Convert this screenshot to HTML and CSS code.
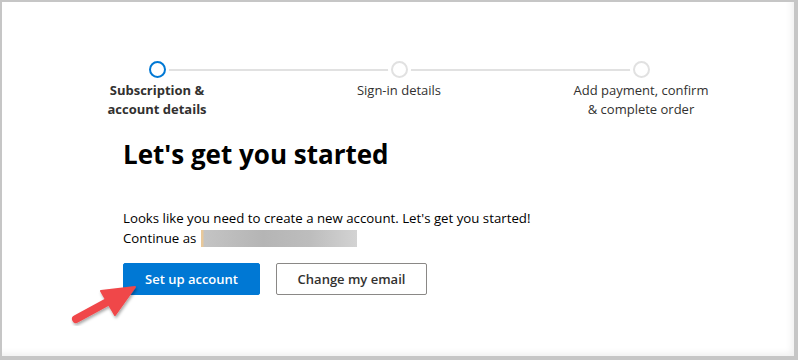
FILE: index.html
```html
<!DOCTYPE html>
<html lang="en">
<head>
  <meta charset="UTF-8" />
  <title>Let's get you started</title>
  <link rel="stylesheet" href="styles.css">
</head>
<body>
  <div class="frame">
    <div class="stepper">
      <div class="step active first">
        <span class="dot"></span>
        <span class="label">Subscription &amp;<br>account details</span>
      </div>
      <div class="step">
        <span class="dot"></span>
        <span class="label">Sign-in details</span>
      </div>
      <div class="step last">
        <span class="dot"></span>
        <span class="label">Add payment, confirm<br>&amp; complete order</span>
      </div>
    </div>

    <div class="content">
      <h1>Let's get you started</h1>
      <p class="intro">
        Looks like you need to create a new account. Let's get you started!<br>
        Continue as <span class="blur"></span>
      </p>
      <div class="actions">
        <button class="btn primary">Set up account</button>
        <button class="btn secondary">Change my email</button>
      </div>
    </div>

    <svg class="arrow" width="80" height="50" viewBox="0 0 80 50">
      <defs>
        <filter id="sh" x="-20%" y="-20%" width="150%" height="150%">
          <feDropShadow dx="1" dy="2" stdDeviation="1.6" flood-color="#000" flood-opacity="0.35"/>
        </filter>
      </defs>
      <g filter="url(#sh)" fill="#f0474a" stroke="#f0474a">
        <line x1="9" y1="43" x2="44" y2="24" stroke-width="8" stroke-linecap="round"/>
        <polygon points="68,11 34,15 48,39" stroke-width="2" stroke-linejoin="round"/>
      </g>
    </svg>
  </div>
</body>
</html>
```

FILE: styles.css
```css
* {
  box-sizing: border-box;
}

body {
  margin: 0;
  font-family: 'Open Sans', 'Noto Sans', sans-serif;
  color: #000;
  background: #fff;
}

.frame {
  position: relative;
  width: 798px;
  height: 360px;
  border-top: 2px solid #c6c6c6;
  border-left: 2px solid #c6c6c6;
  border-right: 4px solid #c6c6c6;
  border-bottom: 4px solid #c6c6c6;
  box-shadow: inset -6px -6px 6px -3px rgba(0, 0, 0, 0.06);
  padding-top: 59px;
}

.stepper {
  display: grid;
  grid-template-columns: repeat(3, 242px);
  margin-left: 34px;
}

.step {
  position: relative;
  display: flex;
  flex-direction: column;
  align-items: center;
}

.step::before {
  content: "";
  position: absolute;
  top: 8px;
  left: 0;
  right: 0;
  height: 2px;
  background: #e1e1e1;
}

.step.first::before {
  left: 50%;
}

.step.last::before {
  right: 50%;
}

.dot {
  position: relative;
  width: 17px;
  height: 17px;
  border: 2px solid #e1e1e1;
  border-radius: 50%;
  background: #fff;
  box-shadow: 0 0 0 3px #fff;
}

.step.active .dot {
  border-color: #0078d4;
}

.label {
  margin-top: 3px;
  font-size: 13px;
  line-height: 19px;
  text-align: center;
  color: #323130;
}

.step.active .label {
  font-weight: 700;
}

.content {
  padding-left: 121px;
}

h1 {
  margin: 18px 0 0;
  font-size: 26px;
  line-height: 34px;
  font-weight: 700;
}

.intro {
  margin: 37px 0 0;
  font-size: 13.25px;
  line-height: 20px;
}

.blur {
  display: inline-block;
  width: 156px;
  height: 17px;
  vertical-align: -4px;
  margin-left: 1px;
  background: linear-gradient(90deg, #e8c89a 0, #e8c89a 2px, #c4c4c4 3px, #b5b5b5 40%, #bdbdbd 70%, #d3d3d3 100%);
}

.actions {
  display: flex;
  gap: 16px;
  margin-top: 15px;
}

.btn {
  height: 32px;
  padding: 0 20px;
  font-family: inherit;
  font-size: 13px;
  font-weight: 600;
  border-radius: 2px;
  cursor: pointer;
}

.primary {
  width: 137px;
  background: #0078d4;
  border: 1px solid #0078d4;
  color: #fff;
}

.secondary {
  width: 151px;
  background: #fff;
  border: 1px solid #8a8886;
  color: #323130;
}

.arrow {
  position: absolute;
  left: 65px;
  top: 274px;
}
```
